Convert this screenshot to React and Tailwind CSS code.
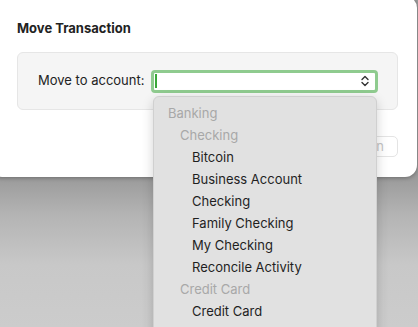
const GROUPS = [
  { label: 'Banking', level: 0, header: true },
  { label: 'Checking', level: 1, header: true },
  { label: 'Bitcoin', level: 2 },
  { label: 'Business Account', level: 2 },
  { label: 'Checking', level: 2 },
  { label: 'Family Checking', level: 2 },
  { label: 'My Checking', level: 2 },
  { label: 'Reconcile Activity', level: 2 },
  { label: 'Credit Card', level: 1, header: true },
  { label: 'Credit Card', level: 2 },
]

const INDENT = ['pl-[14px]', 'pl-[26px]', 'pl-[38px]']

function UpDown() {
  return (
    <svg width="8" height="12" viewBox="0 0 8 12" fill="none" stroke="#333" strokeWidth="1.4" strokeLinecap="round" strokeLinejoin="round">
      <path d="M1 4.5 L4 1.5 L7 4.5" />
      <path d="M1 7.5 L4 10.5 L7 7.5" />
    </svg>
  )
}

export default function App() {
  return (
    <div
      className="relative w-[418px] h-[327px] overflow-hidden bg-[linear-gradient(to_bottom,#9a9a9a_176px,#b4b4b4_215px,#c8c8c8_265px,#cccccc_327px)]"
      style={{ fontFamily: 'Inter, "Noto Sans", sans-serif' }}
    >
      <div className="-ml-[10px] -mt-[4px] w-[427px] h-[181px] rounded-[12px] bg-white shadow-[0_1px_4px_rgba(0,0,0,0.3)] pl-[27px] pr-[19px] pt-[24px]">
        <h1 className="text-[13px] font-bold text-[#222] leading-[16px]">Move Transaction</h1>
        <div className="mt-[16px] h-[58px] rounded-[6px] border border-[#e6e6e6] bg-[#f5f5f5] flex items-center pl-[20px] pr-[19px]">
          <span className="text-[13px] text-[#222] whitespace-nowrap">Move to account:</span>
          <div className="ml-[7px] flex-1 h-[23px] rounded-[4px] border-[3px] border-[#8fcb8f] bg-white flex items-center pl-[1px] pr-[6px]">
            <div className="w-[2px] h-[14px] bg-[#3aa83a]" />
            <div className="flex-1" />
            <UpDown />
          </div>
        </div>
        <div className="mt-[26px] flex justify-end">
          <button className="h-[21px] px-[13px] rounded-[5px] border border-[#e4e4e4] bg-white text-[13px] text-[#c4c4c4] leading-none">
            Move Transaction
          </button>
        </div>
      </div>

      <div className="absolute left-[153px] top-[96px] w-[224px] h-[240px] rounded-[6px] border border-[#d0d0d0] bg-[#e1e1e1] shadow-[0_4px_12px_rgba(0,0,0,0.18)] pt-[6px]">
        {GROUPS.map((g, i) => (
          <div
            key={i}
            className={`h-[22px] flex items-center text-[13px] whitespace-nowrap ${INDENT[g.level]} ${
              g.header ? 'text-[#a8a8a8]' : 'text-[#1f1f1f]'
            }`}
          >
            {g.label}
          </div>
        ))}
      </div>
    </div>
  )
}
